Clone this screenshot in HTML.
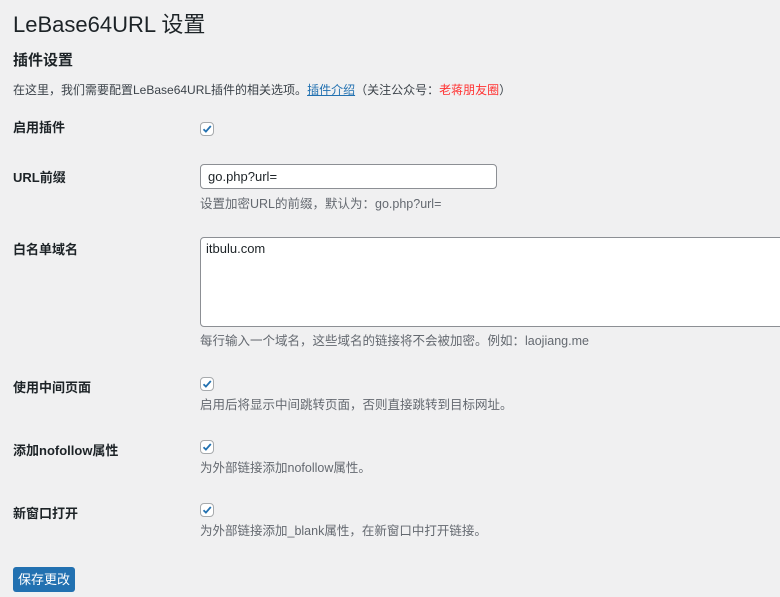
<!DOCTYPE html>
<html><head><meta charset="utf-8"><style>
body{margin:0;width:780px;height:597px;background:#f0f0f1;font-family:"Liberation Sans","Noto Sans CJK SC",sans-serif;color:#1d2327;font-size:13px;position:relative;overflow:hidden}
.a{position:absolute;white-space:nowrap}
.lb{font-weight:bold;font-size:13px;left:13px}
.cb{position:absolute;left:200px;width:14px;height:14px;border:1px solid #a7aaad;border-radius:4px;background:#fff;box-sizing:border-box}
.cb svg{position:absolute;left:-1px;top:-1px}
.h{color:#646970;left:200px;font-size:12.5px}
</style></head><body>
<div class="a" style="left:13px;top:7px;font-size:22px;font-weight:400">LeBase64URL 设置</div>
<div class="a" style="left:13px;top:49px;font-size:15px;font-weight:bold">插件设置</div>
<div class="a" style="left:13px;top:81px;font-size:12px;color:#3c434a">在这里，我们需要配置LeBase64URL插件的相关选项。<span style="color:#2271b1;text-decoration:underline">插件介绍</span>（关注公众号：<span style="color:#f33">老蒋朋友圈</span>）</div>

<div class="a lb" style="top:117px">启用插件</div>
<div class="cb" style="top:122px"><svg width="14" height="14" viewBox="0 0 14 14"><path d="M3.5 7.2l2.4 2.4L10.8 4" stroke="#2271b1" stroke-width="1.8" fill="none"/></svg></div>

<div class="a lb" style="top:167px">URL前缀</div>
<div class="a" style="left:200px;top:164px;width:297px;height:25px;border:1px solid #8c8f94;border-radius:4px;background:#fff;box-sizing:border-box;padding:4px 7px;font-size:13px">go.php?url=</div>
<div class="a h" style="top:193px">设置加密URL的前缀，默认为：go.php?url=</div>

<div class="a lb" style="top:239px">白名单域名</div>
<div class="a" style="left:200px;top:237px;width:590px;height:90px;border:1px solid #8c8f94;border-radius:4px;background:#fff;box-sizing:border-box;padding:3px 5px;font-size:13px">itbulu.com</div>
<div class="a h" style="top:330px">每行输入一个域名，这些域名的链接将不会被加密。例如：laojiang.me</div>

<div class="a lb" style="top:377px">使用中间页面</div>
<div class="cb" style="top:377px"><svg width="14" height="14" viewBox="0 0 14 14"><path d="M3.5 7.2l2.4 2.4L10.8 4" stroke="#2271b1" stroke-width="1.8" fill="none"/></svg></div>
<div class="a h" style="top:394px">启用后将显示中间跳转页面，否则直接跳转到目标网址。</div>

<div class="a lb" style="top:440px">添加nofollow属性</div>
<div class="cb" style="top:440px"><svg width="14" height="14" viewBox="0 0 14 14"><path d="M3.5 7.2l2.4 2.4L10.8 4" stroke="#2271b1" stroke-width="1.8" fill="none"/></svg></div>
<div class="a h" style="top:457px">为外部链接添加nofollow属性。</div>

<div class="a lb" style="top:503px">新窗口打开</div>
<div class="cb" style="top:503px"><svg width="14" height="14" viewBox="0 0 14 14"><path d="M3.5 7.2l2.4 2.4L10.8 4" stroke="#2271b1" stroke-width="1.8" fill="none"/></svg></div>
<div class="a h" style="top:520px">为外部链接添加_blank属性，在新窗口中打开链接。</div>

<div class="a" style="left:13px;top:567px;width:62px;height:25px;background:#2271b1;border-radius:3px;color:#fff;font-size:13px;text-align:center;line-height:25px">保存更改</div>
</body></html>
